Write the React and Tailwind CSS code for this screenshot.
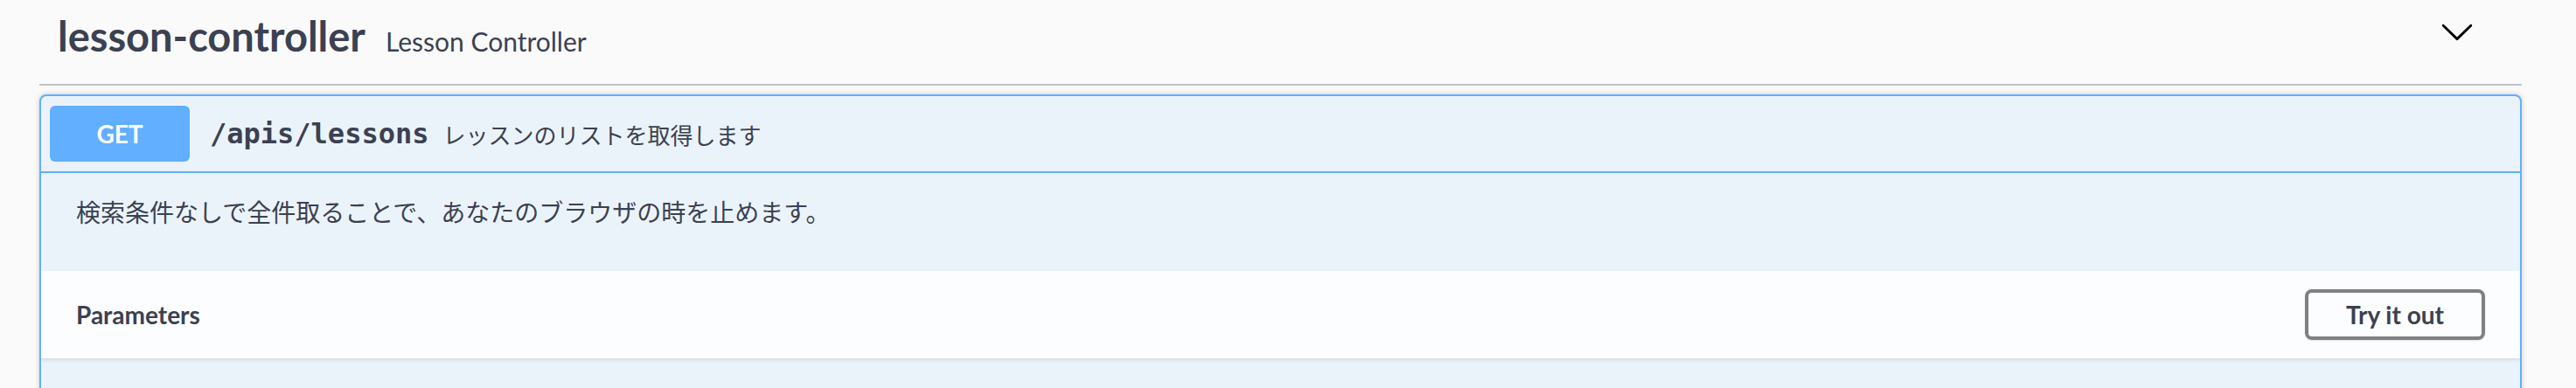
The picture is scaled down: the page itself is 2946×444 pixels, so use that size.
import React from "react";

const sans = { fontFamily: "Lato, 'Noto Sans', sans-serif" };

function Chevron() {
	return (
		<svg width="40" height="40" viewBox="0 0 20 20" className="mb-[24px]">
			<path
				fill="#000"
				d="M17.418 6.109c.272-.268.709-.268.979 0s.271.701 0 .969l-7.908 7.83c-.27.268-.707.268-.979 0l-7.908-7.83c-.27-.268-.27-.701 0-.969.271-.268.709-.268.979 0L10 13.25l7.418-7.141z"
			/>
		</svg>
	);
}

export default function App() {
	return (
		<div className="h-screen overflow-hidden bg-[#fafafa] pl-[45px] pr-[62px] text-[#3b4151]" style={sans}>
			{/* Tag header */}
			<div className="flex h-[98px] items-center justify-between border-b-2 border-[#c1c3c7] pl-[21px] pr-[54px]">
				<div className="mb-[14px] flex items-baseline gap-[23px]">
					<span className="text-[47px] font-bold leading-none">lesson-controller</span>
					<span className="text-[30px] leading-none">Lesson Controller</span>
				</div>
				<Chevron />
			</div>

			{/* Operation block */}
			<div className="mt-[10px] overflow-hidden rounded-[8px] border-2 border-[#61affe] bg-[#ebf3fa] shadow-[0_0_6px_rgba(0,0,0,0.19)]">
				<div className="flex h-[88px] items-center border-b-2 border-[#61affe] px-[10px]">
					<div className="flex h-[64px] w-[160px] items-center justify-center rounded-[6px] bg-[#61affe] text-[28px] font-bold text-white">
						GET
					</div>
					<span
						className="ml-[23px] text-[32px] font-semibold"
						style={{ fontFamily: "'DejaVu Sans Mono', 'Liberation Mono', monospace" }}
					>
						/apis/lessons
					</span>
					<span
						className="ml-[16px] text-[26px]"
						style={{ fontFamily: "'Noto Sans CJK JP', 'Noto Sans', sans-serif" }}
					>
						レッスンのリストを取得します
					</span>
				</div>

				<div className="h-[112px] px-[40px] pt-[20px]">
					<p
						className="text-[28px] leading-[48px]"
						style={{ fontFamily: "'Noto Sans CJK JP', 'Noto Sans', sans-serif" }}
					>
						検索条件なしで全件取ることで、あなたのブラウザの時を止めます。
					</p>
				</div>

				<div className="flex h-[100px] items-center justify-between bg-[#fbfdfe] px-[40px] shadow-[0_2px_4px_rgba(0,0,0,0.1)]">
					<span className="text-[28px] font-bold">Parameters</span>
					<button className="h-[58px] w-[206px] rounded-[8px] border-4 border-[#808080] text-[28px] font-bold text-[#3b4151] shadow-[0_1px_2px_rgba(0,0,0,0.1)]">
						Try it out
					</button>
				</div>

				<div className="h-[80px]" />
			</div>
		</div>
	);
}
